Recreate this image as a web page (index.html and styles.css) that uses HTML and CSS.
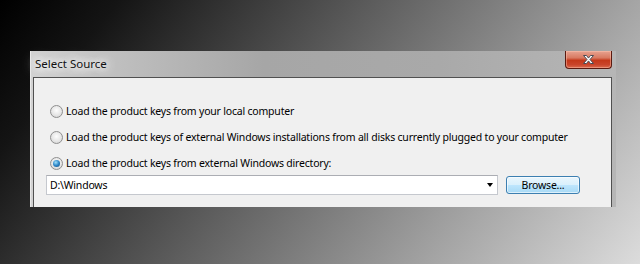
FILE: index.html
```html
<!DOCTYPE html>
<html lang="en">
<head>
    <meta charset="UTF-8">
    <meta name="viewport" content="width=device-width, initial-scale=1.0">
    <title>Select Source</title>
    <link rel="stylesheet" href="styles.css">
</head>
<body>
    <div class="stage">
        <div class="dialog">
            <div class="titlebar">
                <span class="title">Select Source</span>
                <button class="close" aria-label="Close">
                    <svg width="13" height="11" viewBox="0 0 13 11">
                        <path d="M1.5 1.5h3l2 2.6 2-2.6h3l-3.5 4 3.5 4h-3l-2-2.6-2 2.6h-3l3.5-4z" fill="#fff" stroke="#4b4b55" stroke-width="1" stroke-linejoin="round"/>
                    </svg>
                </button>
            </div>
            <div class="panel">
                <div class="options">
                    <label class="option">
                        <input type="radio" name="source">
                        <span class="dot"></span>
                        Load the product keys from your local computer
                    </label>
                    <label class="option">
                        <input type="radio" name="source">
                        <span class="dot"></span>
                        Load the product keys of external Windows installations from all disks currently plugged to your computer
                    </label>
                    <label class="option">
                        <input type="radio" name="source" checked>
                        <span class="dot"></span>
                        Load the product keys from external Windows directory:
                    </label>
                </div>
                <div class="path-row">
                    <div class="combo">
                        <span class="combo-text">D:\Windows</span>
                        <span class="arrow"></span>
                    </div>
                    <button class="browse">Browse...</button>
                </div>
            </div>
        </div>
    </div>
</body>
</html>
```

FILE: styles.css
```css
body {
    margin: 0;
    width: 640px;
    height: 264px;
    overflow: hidden;
    font-family: 'Noto Sans', 'Open Sans', sans-serif;
    font-size: 10.5px;
    letter-spacing: -0.2px;
    color: #000;
    background: linear-gradient(128deg, #000 0%, #141414 14%, #5e5e5e 45%, #a4a4a4 75%, #dcdcdc 100%);
}
.stage {
    padding: 51px 0 0 30px;
}
.dialog {
    width: 586px;
    height: 156px;
    display: flex;
    flex-direction: column;
    background: linear-gradient(to right, #d2d2d2 0%, #c2c2c2 12%, #a6a6a6 40%, #a9a9a9 70%, #b6b6b6 100%);
    box-shadow: inset 1px 0 0 rgba(255, 255, 255, 0.5);
}
.titlebar {
    height: 26px;
    display: flex;
    align-items: flex-start;
    justify-content: space-between;
}
.title {
    margin: 5px 0 0 5px;
    font-size: 11.5px;
    letter-spacing: 0;
    color: #111;
    text-shadow: 0 0 6px #fff, 0 0 10px #fff, 0 0 14px #fff, 0 0 18px #f4f4f4;
}
.close {
    width: 47px;
    height: 18px;
    margin-right: 4px;
    padding: 0;
    border: 1px solid #5a1a10;
    border-top: none;
    border-radius: 0 0 4px 4px;
    background: linear-gradient(to bottom, #e8a391 0%, #d87a62 40%, #c4381a 55%, #c9442a 80%, #da6a4e 100%);
    box-shadow: inset 0 0 0 1px rgba(255, 200, 180, 0.45);
    display: flex;
    align-items: center;
    justify-content: center;
}
.panel {
    flex: 1;
    margin: 0 4px 0 3px;
    background: #f0f0f0;
    border: 1px solid #505050;
    border-bottom: none;
    padding: 20px 0 0 12px;
}
.options {
    display: grid;
    grid-auto-rows: 26px;
}
.option {
    display: flex;
    align-items: center;
    white-space: nowrap;
}
.option input {
    display: none;
}
.dot {
    width: 11px;
    height: 11px;
    margin: 0 3px 0 4px;
    border: 1px solid #8f8f8f;
    border-radius: 50%;
    background: radial-gradient(circle at 50% 40%, #fdfdfd 0%, #e6e6e6 55%, #cfcfcf 100%);
    position: relative;
}
.option input:checked + .dot::after {
    content: "";
    position: absolute;
    left: 2px;
    top: 2px;
    width: 7px;
    height: 7px;
    border-radius: 50%;
    background: radial-gradient(circle at 40% 35%, #9fe0fb 0%, #2d86c8 50%, #174b7a 100%);
}
.path-row {
    display: flex;
    align-items: center;
    margin-top: -1px;
}
.combo {
    width: 447px;
    height: 18px;
    border: 1px solid #c5c8ce;
    border-top-color: #abadb3;
    background: #fff;
    display: flex;
    align-items: center;
    justify-content: space-between;
    padding: 0 0 0 3px;
}
.arrow {
    width: 0;
    height: 0;
    margin-right: 4px;
    border-left: 3.5px solid transparent;
    border-right: 3.5px solid transparent;
    border-top: 4px solid #000;
}
.browse {
    width: 74px;
    height: 18px;
    margin-left: 8px;
    padding: 0;
    font-family: inherit;
    font-size: 10.5px;
    letter-spacing: -0.2px;
    color: #000;
    border: 1px solid #3c7fb1;
    border-radius: 3px;
    background: linear-gradient(to bottom, #eaf6fd 0%, #d9f0fc 50%, #bee6fd 51%, #a7d9f5 100%);
    box-shadow: inset 0 0 0 1px rgba(255, 255, 255, 0.6);
}
```
